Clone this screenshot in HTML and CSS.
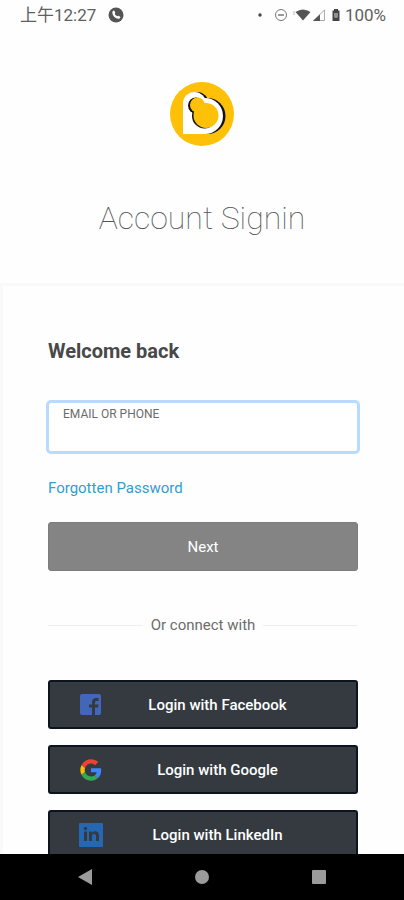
FILE: index.html
```html
<!DOCTYPE html>
<html lang="en">
<head>
  <meta charset="UTF-8" />
  <meta name="viewport" content="width=device-width, initial-scale=1" />
  <title>Account Signin</title>
  <link rel="stylesheet" href="styles.css">
</head>
<body>
  <div class="status-bar">
    <span class="clock">上午12:27</span>
    <svg class="call-icon" width="16" height="16" viewBox="0 0 16 16" aria-hidden="true">
      <circle cx="8" cy="8" r="7.500" fill="#555" />
      <path d="M4.600 4.200c.6-.9 1.500-.9 1.900-.1l.7 1.300c.3.6-.6 1.100-.4 1.600.4.9 1.200 1.700 2.100 2.100.6.3 1-.7 1.700-.4l1.200.7c.8.5.7 1.500-.2 2-3.400 1.600-8.400-3.600-7-7.200z" fill="#fff" />
    </svg>
    <div class="status-icons">
      <svg width="90" height="16" viewBox="0 0 90 16" aria-hidden="true">
        <circle cx="9" cy="8" r="1.700" fill="#444" />
        <circle cx="30" cy="8" r="5.500" fill="none" stroke="#777" />
        <path d="M27 8h6" stroke="#777" stroke-width="1.500" />
        <path d="M43 4v4" stroke="#bbb" />
        <path d="M44.500 5q7.500-5 15 0L52 13.500z" fill="#555" />
        <path d="M62.500 13.500L73.500 3v10.500z" fill="none" stroke="#aaa" />
        <path d="M62 14l7-6.500V14z" fill="#555" />
        <path d="M83 2h4v1.500h1.500V14h-7V3.500H83z" fill="#444" />
        <path d="M83.500 6h3v4.500h-3z" fill="#ddd" />
        <path d="M85 6v4" stroke="#444" />
      </svg>
      <span>100%</span>
    </div>
  </div>

  <main>
    <header>
      <svg class="logo" width="64" height="64" viewBox="0 0 64 64" role="img" aria-label="Logo">
        <circle cx="32" cy="32" r="32" fill="#ffc107" />
        <g fill="#111">
          <circle cx="27" cy="21.500" r="11.500" />
          <circle cx="37.500" cy="34" r="18" />
        </g>
        <g fill="#fff">
          <circle cx="24.500" cy="21.500" r="11.500" />
          <circle cx="35" cy="34" r="18" />
          <path d="M13 21h22v31H13z" />
        </g>
        <g fill="#111">
          <circle cx="26" cy="23.500" r="8" />
          <circle cx="34.500" cy="34" r="12.500" />
        </g>
        <g fill="#ffc107">
          <circle cx="27.500" cy="23" r="7.500" />
          <circle cx="36" cy="33.500" r="12.500" />
        </g>
      </svg>
      <h1>Account Signin</h1>
    </header>

    <section class="panel">
      <h2>Welcome back</h2>
      <form onsubmit="return false">
        <div class="field">
          <label for="login">EMAIL OR PHONE</label>
          <input id="login" type="text" />
        </div>
        <a class="forgotten" href="#">Forgotten Password</a>
        <button class="btn btn-next" type="submit">Next</button>
      </form>

      <div class="divider"><span>Or connect with</span></div>

      <div class="social">
        <button class="btn btn-social" type="button">
          <svg width="24" height="24" viewBox="0 0 24 24" aria-hidden="true">
            <rect x="1" y="1" width="21" height="21" rx="2" fill="#4267b8" />
            <path d="M13 22v-7.500h-3v-3h3V9.500C13 6.500 14.500 5 17 5h2.500v3h-1.800c-1.200 0-1.700.6-1.700 1.700v1.800h3.500l-.5 3h-3V22z" fill="#343a40" />
          </svg>
          <span>Login with Facebook</span>
        </button>
        <button class="btn btn-social" type="button">
          <svg width="24" height="24" viewBox="-3 -3 54 54" aria-hidden="true">
            <path fill="#ea4335" d="M24 9.500c3.540 0 6.710 1.220 9.210 3.600l6.850-6.850C35.900 2.380 30.470 0 24 0 14.620 0 6.510 5.380 2.560 13.220l7.980 6.190C12.430 13.720 17.740 9.500 24 9.500z" />
            <path fill="#4285f4" d="M46.980 24.550c0-1.570-.15-3.090-.38-4.550H24v9.020h12.940c-.58 2.960-2.260 5.480-4.780 7.180l7.730 6c4.510-4.180 7.090-10.360 7.090-17.650z" />
            <path fill="#fbbc05" d="M10.530 28.590A14.500 14.500 0 0 1 9.770 24c0-1.600.27-3.140.76-4.590l-7.980-6.190A24 24 0 0 0 0 24c0 3.880.92 7.540 2.560 10.780z" />
            <path fill="#34a853" d="M24 48c6.480 0 11.930-2.130 15.890-5.810l-7.730-6c-2.150 1.450-4.920 2.300-8.160 2.300-6.260 0-11.570-4.220-13.470-9.910l-7.980 6.190C6.510 42.620 14.620 48 24 48z" />
          </svg>
          <span>Login with Google</span>
        </button>
        <button class="btn btn-social" type="button">
          <svg width="24" height="24" viewBox="0 0 24 24" aria-hidden="true">
            <rect width="24" height="24" rx="1" fill="#2467b2" />
            <circle cx="6.500" cy="5.500" r="1.700" fill="#343a40" />
            <path d="M5 8.500h3V18H5zM10 8.500h3V10c1.500-2.500 7-2.500 7 2.500V18h-3v-5c0-3-4-3-4 0v5h-3z" fill="#343a40" />
          </svg>
          <span>Login with LinkedIn</span>
        </button>
      </div>
    </section>
  </main>

  <nav class="nav-bar">
    <button type="button" aria-label="Back">
      <svg width="16" height="18" viewBox="0 0 16 18"><path d="M15 1v16L1 9z" fill="#9b9b9b" /></svg>
    </button>
    <button type="button" aria-label="Home">
      <svg width="16" height="16" viewBox="0 0 16 16"><circle cx="8" cy="8" r="7" fill="#9b9b9b" /></svg>
    </button>
    <button type="button" aria-label="Recents">
      <svg width="16" height="16" viewBox="0 0 16 16"><rect x="1" y="1" width="14" height="14" rx="1" fill="#9b9b9b" /></svg>
    </button>
  </nav>
</body>
</html>
```
FILE: styles.css
```css
* {
  box-sizing: border-box;
}

body {
  margin: 0;
  height: 100vh;
  display: flex;
  flex-direction: column;
  overflow: hidden;
  background-color: #fefefe;
  color: #6c6c6c;
  font-family: Roboto, "Noto Sans CJK TC", sans-serif;
  font-size: 15px;
  line-height: 20px;
}

/* Status bar */
.status-bar {
  flex: none;
  display: flex;
  align-items: center;
  height: 30px;
  padding: 0 18px 0 20px;
  color: #5f5f5f;
  font-size: 17px;
}

.call-icon {
  margin-left: 12px;
}

.status-icons {
  display: flex;
  align-items: center;
  gap: 4px;
  margin-left: auto;
}

main {
  flex: 1;
  min-height: 0;
  overflow: hidden;
}

header {
  display: flex;
  flex-direction: column;
  align-items: center;
  padding: 52px 0 45px;
}

h1 {
  margin: 52px 0 0;
  color: #555;
  font-size: 32px;
  font-weight: 100;
  line-height: 40px;
}

.panel {
  padding: 53px 46px 20px 45px;
  border-top: 3px solid #f9f9f9;
  border-left: 3px solid #f9f9f9;
}

h2 {
  margin: 0 0 39px;
  color: #484848;
  font-size: 20px;
  font-weight: 700;
  line-height: 24px;
}

/* Form */
.field {
  position: relative;
}

.field label {
  position: absolute;
  top: 4px;
  left: 15px;
  font-size: 12px;
  line-height: 16px;
}

.field input {
  display: block;
  width: 100%;
  height: 50px;
  padding: 18px 15px 4px;
  border: 1px solid #b8daff;
  border-radius: 3px;
  outline: none;
  box-shadow: 0 0 0 2px #b8daff;
  background-color: #fff;
  font: inherit;
}

.forgotten {
  display: block;
  margin: 26px 0 24px;
  color: #2e9fd0;
  text-decoration: none;
}

.btn {
  display: flex;
  align-items: center;
  justify-content: center;
  width: 100%;
  height: 49px;
  border-radius: 3px;
  color: #fff;
  font: inherit;
  cursor: pointer;
}

.btn-next {
  border: 1px solid #7c7c7c;
  background-color: #848484;
}

.divider {
  display: flex;
  align-items: center;
  gap: 8px;
  margin: 44px 0 45px;
}

.divider::before,
.divider::after {
  content: "";
  flex: 1;
  height: 1px;
  background-color: #eee;
}

.social {
  display: grid;
  gap: 16px;
}

.btn-social {
  padding: 0 24px 0 29px;
  border: 2px solid #0c141d;
  background-color: #343a40;
  font-weight: 500;
}

.btn-social span {
  flex: 1;
}

/* Bottom navigation */
.nav-bar {
  flex: none;
  display: grid;
  grid-template-columns: repeat(3, 1fr);
  align-items: center;
  height: 46px;
  padding: 0 26px;
  background-color: #000;
}

.nav-bar button {
  display: flex;
  align-items: center;
  justify-content: center;
  padding: 0;
  border: none;
  background: none;
}
```
